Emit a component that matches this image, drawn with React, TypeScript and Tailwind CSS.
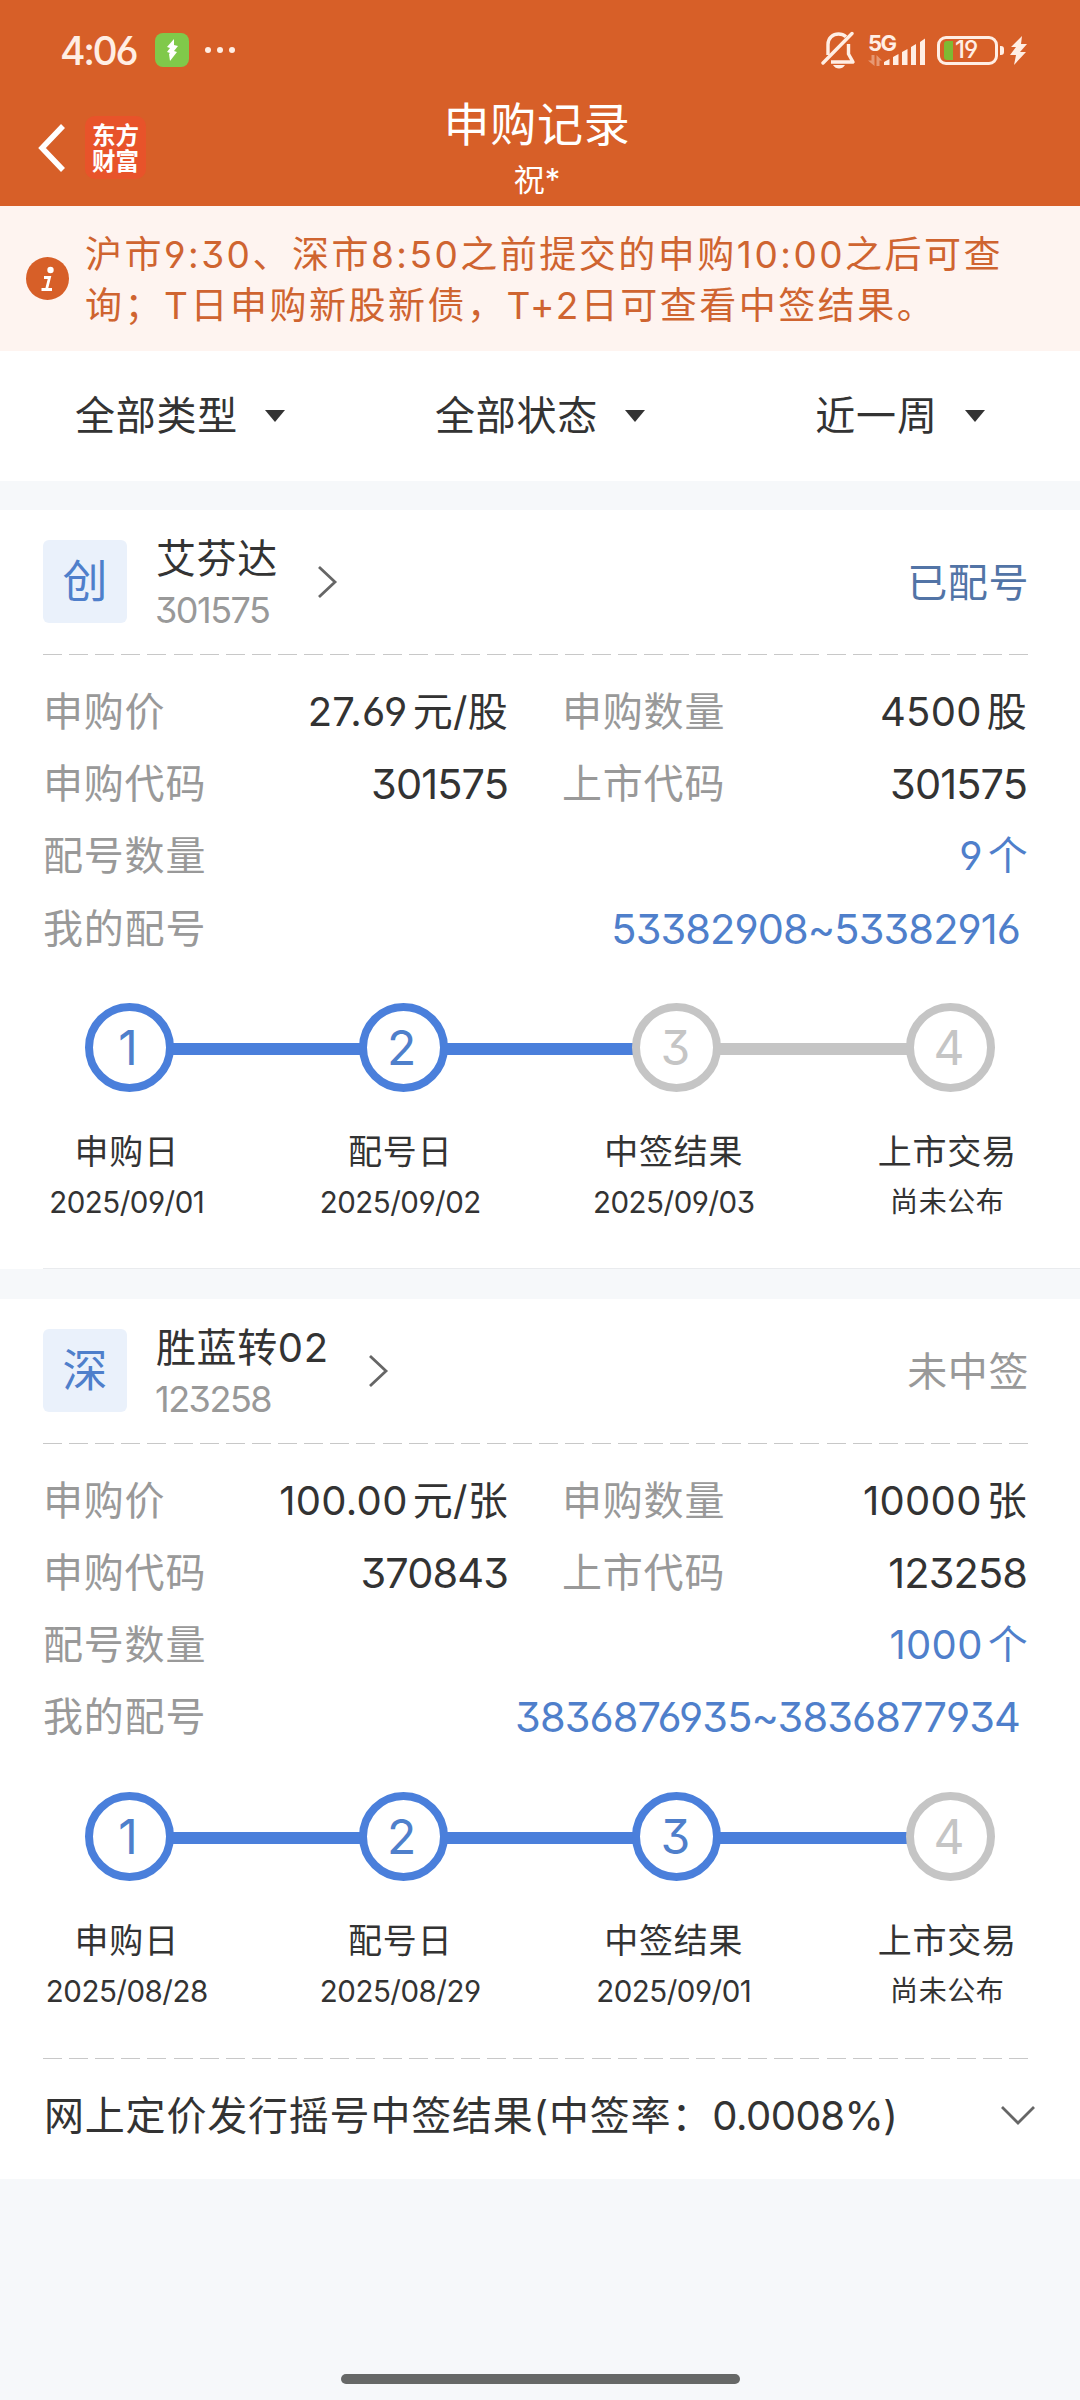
import clsx from "clsx";

type Step = { label: string; date: string; done: boolean };

type Subscription = {
  badge: string;
  name: string;
  code: string;
  status: string;
  statusClass: string;
  price: string;
  amount: string;
  applyCode: string;
  listCode: string;
  count: string;
  numbers: string;
  steps: Step[];
  rate?: string;
};

const filters = ["全部类型", "全部状态", "近一周"];

const subscriptions: Subscription[] = [
  {
    badge: "创",
    name: "艾芬达",
    code: "301575",
    status: "已配号",
    statusClass: "text-[#5274a6]",
    price: "27.69元/股",
    amount: "4500股",
    applyCode: "301575",
    listCode: "301575",
    count: "9个",
    numbers: "53382908~53382916",
    steps: [
      { label: "申购日", date: "2025/09/01", done: true },
      { label: "配号日", date: "2025/09/02", done: true },
      { label: "中签结果", date: "2025/09/03", done: false },
      { label: "上市交易", date: "尚未公布", done: false },
    ],
  },
  {
    badge: "深",
    name: "胜蓝转02",
    code: "123258",
    status: "未中签",
    statusClass: "text-[#999999]",
    price: "100.00元/张",
    amount: "10000张",
    applyCode: "370843",
    listCode: "123258",
    count: "1000个",
    numbers: "3836876935~3836877934",
    steps: [
      { label: "申购日", date: "2025/08/28", done: true },
      { label: "配号日", date: "2025/08/29", done: true },
      { label: "中签结果", date: "2025/09/01", done: true },
      { label: "上市交易", date: "尚未公布", done: false },
    ],
    rate: "0.0008%",
  },
];

function StatusBar() {
  return (
    <div className="flex h-[100px] items-center pl-[60px] pr-[53px] text-[#ffeee4]">
      <span className="w-[95px] text-[39px] font-medium leading-none tracking-[-2.4px]">4:06</span>
      <div className="flex size-[34px] items-center justify-center rounded-[8px] bg-[#80c94a]">
        <svg width="12" height="22" viewBox="0 0 12 22" fill="#fff">
          <path d="M8 0 1 8l3 1-3 4 3 1-1 1 1 7 7-9-3-1 4-5-4-1z" />
        </svg>
      </div>
      <div className="ml-[16px] flex gap-[6px]">
        <span className="size-[6px] rounded-full bg-current" />
        <span className="size-[6px] rounded-full bg-current" />
        <span className="size-[6px] rounded-full bg-current" />
      </div>

      <svg className="ml-auto" width="36" height="38" viewBox="0 0 36 38" fill="none" stroke="currentColor" strokeWidth="3.4">
        <path d="M7 24V13.5C7 7 12 3 17.500 3c3 0 5.500 1 7.500 2.800" />
        <path d="M27.500 13v10l4.500 8H10" strokeLinejoin="round" />
        <path d="M2 32 31 2.500" strokeLinecap="round" />
        <path d="M12 34h12c-1.500 2.500-3.500 3.500-6 3.500s-4.500-1-6-3.500z" fill="currentColor" stroke="none" />
      </svg>

      <div className="relative ml-[11px] h-[32px] w-[58px]">
        <span className="absolute left-0 -top-[2px] text-[22px] font-bold leading-none tracking-[-1.6px]">5G</span>
        <svg className="size-full" viewBox="0 0 58 32" fill="currentColor">
          <g opacity="0.4">
            <path d="M3.500 21h3v11L0 26.500h3.500zM8.500 32V21l5.500 5.500h-2.500V32z" />
          </g>
          <path d="M16 28l5.500-3v6h-5.500zM25 23l5.500-3v11H25zM34 18l5.500-3v16H34zM43 13l5-3v21h-5zM52 8l5-3.500V31h-5z" />
        </svg>
      </div>

      <div className="ml-[11px] flex items-center">
        <div className="flex h-[29px] w-[61px] items-center rounded-[9px] border-[3px] border-current pl-[4px]">
          <span className="h-[19px] w-[9px] rounded-l-[3px] bg-[#7eba33]" />
          <span className="ml-[2px] text-[24px] font-medium leading-none tracking-[-1px]">19</span>
        </div>
        <span className="ml-[2px] h-[9px] w-[4px] rounded-r-[3px] bg-current" />
      </div>
      <svg className="ml-[6px]" width="17" height="29" viewBox="0 0 17 29" fill="currentColor">
        <path d="M12 0 1 11h5l-6 8h6l-2 10 12-13h-6l7-8h-6z" />
      </svg>
    </div>
  );
}

function Header() {
  return (
    <header className="h-[206px] bg-[#d75f28] text-white">
      <StatusBar />
      <div className="grid h-[106px] grid-cols-3">
        <div className="flex items-start pl-[37px] pt-[16px]">
          <svg className="mt-[7px]" width="30" height="50" viewBox="0 0 30 50" fill="none" stroke="currentColor" strokeWidth="5.500">
            <path d="M26 3 5 25l21 22" />
          </svg>
          <div className="ml-[18px] flex h-[63px] w-[61px] items-center justify-center rounded-[10px] bg-[#e8532a]">
            <p className="-mt-px w-[47px] break-all font-['Noto_Sans_CJK_SC',sans-serif] text-[23.5px] font-bold leading-[26px]">
              东方财富
            </p>
          </div>
        </div>
        <div className="flex flex-col items-center pr-[6px]">
          <h1 className="text-[46px] font-normal leading-[48px] tracking-[0.7px]">申购记录</h1>
          <p className="mt-[15px] text-[31px] leading-[34px]">祝*</p>
        </div>
      </div>
    </header>
  );
}

function Notice() {
  return (
    <div className="flex h-[145px] items-center bg-[#fef4f0] pl-[26px] text-[#cf6430]">
      <svg width="43" height="43" viewBox="0 0 43 43">
        <circle cx="21.500" cy="21.500" r="21.500" fill="#d75f28" />
        <circle cx="24.500" cy="13" r="3.200" fill="#fff" />
        <path d="M18 20.500h5.500l-3 12M15.500 32.500h10.500" fill="none" stroke="#fff" strokeWidth="2.800" />
      </svg>
      <div className="ml-[16px] mt-[2px] whitespace-nowrap text-[37px] leading-[51px] tracking-[2.5px]">
        <p>沪市9:30、深市8:50之前提交的申购10:00之后可查</p>
        <p>询；T日申购新股新债，T+2日可查看中签结果。</p>
      </div>
    </div>
  );
}

function Filters() {
  return (
    <div className="grid h-[130px] grid-cols-3 bg-white">
      {filters.map((item) => (
        <button key={item} className="flex items-center justify-center text-[40px] leading-none tracking-[0.8px]">
          {item}
          <svg className="ml-[27px]" width="20" height="12" viewBox="0 0 20 12" fill="#333">
            <path d="M0 0h20L10 12z" />
          </svg>
        </button>
      ))}
    </div>
  );
}

function Dashes() {
  return (
    <div className="h-px w-[986px] bg-[repeating-linear-gradient(90deg,#c8c8c8_0_19px,transparent_19px_26.12px)]" />
  );
}

function Field({ label, value, digits }: { label: string; value: string; digits?: boolean }) {
  return (
    <div className="flex items-center justify-between">
      <span className="text-[#999999]">{label}</span>
      <span className={clsx(digits ? "text-[41.5px] tracking-[-0.9px]" : "tracking-[0.3px] [text-autospace:normal]")}>
        {value}
      </span>
    </div>
  );
}

function Steps({ steps }: { steps: Step[] }) {
  return (
    <div className="mt-[38px]">
      <div className="flex items-center pl-[42px]">
        {steps.map((step, i) => (
          <div key={step.label} className="flex items-center">
            {i > 0 && (
              <span
                className={clsx(
                  "-mx-px mt-[3px] h-[12px] w-[186.700px]",
                  steps[i - 1].done ? "bg-[#4a7fdb]" : "bg-[#c5c5c5]"
                )}
              />
            )}
            <span
              className={clsx(
                "flex size-[89px] items-center justify-center rounded-full border-[8.5px] pr-[3px] pt-[2px] text-[48px] leading-none",
                step.done ? "border-[#4a7fdb] text-[#4f7fcb]" : "border-[#c5c5c5] text-[#c5c5c5]"
              )}
            >
              {i + 1}
            </span>
          </div>
        ))}
      </div>
      <div className="-ml-[53px] mt-[37px] grid w-[1094px] grid-cols-4">
        {steps.map((step) => (
          <div key={step.label} className="flex flex-col items-center">
            <span className="text-[34px] leading-[46px] tracking-[0.8px]">{step.label}</span>
            <span
              className={clsx(
                "mt-[7px] leading-[40px]",
                step.date.includes("/") ? "text-[29.5px] tracking-[-0.5px]" : "text-[28px] tracking-[0.6px]"
              )}
            >
              {step.date}
            </span>
          </div>
        ))}
      </div>
    </div>
  );
}

function Card({ item }: { item: Subscription }) {
  return (
    <section className="bg-white pl-[43px]">
      <div className="flex h-[144px] items-start pt-[30px]">
        <div className="flex h-[83px] w-[84px] items-center justify-center rounded-[6px] bg-[#eaf1fb] text-[45px] leading-none text-[#4f7fcb]">
          {item.badge}
        </div>
        <div className="-mt-[3px] ml-[29px]">
          <p className="text-[40px] leading-[44px] tracking-[0.6px]">{item.name}</p>
          <p className="-ml-px mt-[7px] text-[36px] leading-[44px] tracking-[-1.5px] text-[#999999]">{item.code}</p>
        </div>
        <svg className="ml-[39px] mt-[25px]" width="22" height="34" viewBox="0 0 22 34" fill="none" stroke="#666" strokeWidth="2.800">
          <path d="M2 2l16 15L2 32" />
        </svg>
        <span className={clsx("ml-auto mr-[51px] mt-[23px] text-[40px] leading-[40px] tracking-[0.6px]", item.statusClass)}>
          {item.status}
        </span>
      </div>
      <Dashes />

      <div className="mt-[21px] text-[40px] leading-[72.2px] tracking-[0.8px]">
        <div className="grid grid-cols-[465px_465px] gap-[54px]">
          <Field label="申购价" value={item.price} />
          <Field label="申购数量" value={item.amount} />
        </div>
        <div className="grid grid-cols-[465px_465px] gap-[54px]">
          <Field label="申购代码" value={item.applyCode} digits />
          <Field label="上市代码" value={item.listCode} digits />
        </div>
        <div className="flex justify-between pr-[52px]">
          <span className="text-[#999999]">配号数量</span>
          <span className="tracking-[0.3px] text-[#4f7fcb] [text-autospace:normal]">{item.count}</span>
        </div>
        <div className="flex justify-between pr-[60px]">
          <span className="text-[#999999]">我的配号</span>
          <span className="text-[41.5px] tracking-[-0.9px] text-[#4f7fcb]">{item.numbers}</span>
        </div>
      </div>

      <Steps steps={item.steps} />

      {item.rate ? (
        <div className="mt-[47px]">
          <Dashes />
          <div className="flex h-[120px] items-center justify-between pb-[6px] pr-[44px]">
            <p className="pl-px text-[40px] leading-none tracking-[0.8px]">
              网上定价发行摇号中签结果(中签率：
              <span className="tracking-[-0.5px]">{item.rate})</span>
            </p>
            <svg width="36" height="22" viewBox="0 0 36 22" fill="none" stroke="#666" strokeWidth="2.800">
              <path d="M2 2l16 16L34 2" />
            </svg>
          </div>
        </div>
      ) : (
        <div className="h-[47px] border-b border-[#e9ebee]" />
      )}
    </section>
  );
}

export default function App() {
  return (
    <div
      lang="zh-CN"
      className="flex h-[2400px] w-[1080px] flex-col overflow-hidden bg-[#f6f8fa] font-['Inter','Noto_Sans_CJK_SC',sans-serif] text-[#333333] [font-feature-settings:'cv03','cv04','cv09']"
    >
      <Header />
      <Notice />
      <Filters />
      <main className="mt-[29px] flex flex-col gap-[30px]">
        {subscriptions.map((item) => (
          <Card key={item.code} item={item} />
        ))}
      </main>
      <div className="mx-auto mb-[16px] mt-auto h-[10px] w-[399px] rounded-full bg-[#666867]" />
    </div>
  );
}
